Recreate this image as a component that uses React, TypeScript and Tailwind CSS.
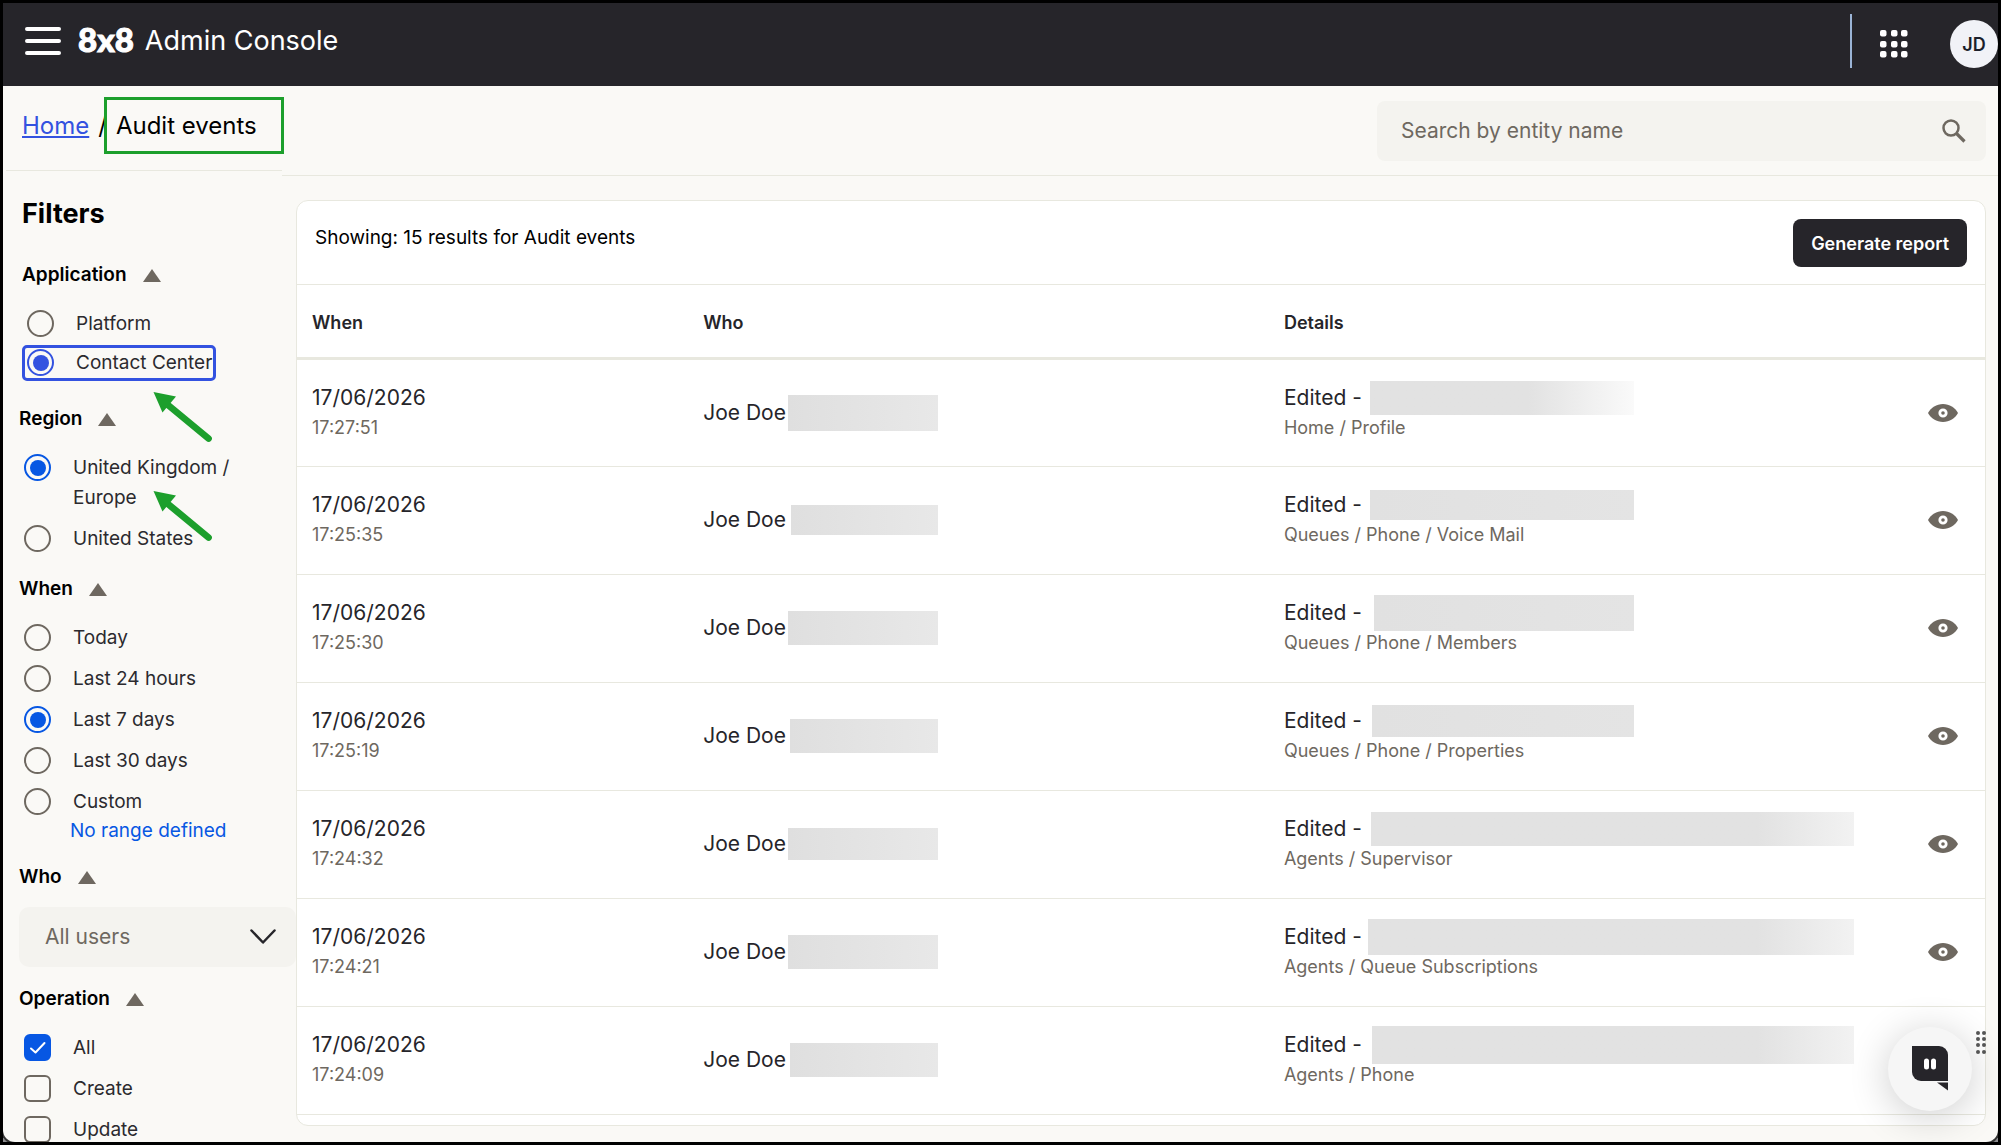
import React, { useState } from 'react'

interface AuditEvent {
  time: string
  path: string
  who: [number, number]
  detail: [number, number]
  fade: 'strong' | 'none' | 'edge'
}

// who / detail: width and height of the masked value
const events: AuditEvent[] = [
  { time: '17:27:51', path: 'Home / Profile', who: [150, 36], detail: [264, 34], fade: 'strong' },
  { time: '17:25:35', path: 'Queues / Phone / Voice Mail', who: [147, 30], detail: [264, 30], fade: 'none' },
  { time: '17:25:30', path: 'Queues / Phone / Members', who: [150, 34], detail: [260, 36], fade: 'none' },
  { time: '17:25:19', path: 'Queues / Phone / Properties', who: [148, 34], detail: [262, 32], fade: 'none' },
  { time: '17:24:32', path: 'Agents / Supervisor', who: [150, 32], detail: [483, 34], fade: 'edge' },
  { time: '17:24:21', path: 'Agents / Queue Subscriptions', who: [150, 34], detail: [486, 36], fade: 'edge' },
  { time: '17:24:09', path: 'Agents / Phone', who: [148, 34], detail: [482, 38], fade: 'edge' },
]

const fades = {
  strong: 'bg-linear-to-r from-[#e2e2e2] from-60% to-[#fafafa]',
  none: 'bg-linear-to-r from-[#e1e1e1] to-[#e4e4e4]',
  edge: 'bg-linear-to-r from-[#e2e2e2] from-80% to-[#f2f2f2]',
}

function EyeIcon() {
  return (
    <svg width="30" height="18" viewBox="0 0 30 18" fill="none">
      <path d="M0 9C3 3.500 8.500 0 15 0s12 3.500 15 9c-3 5.500-8.500 9-15 9S3 14.500 0 9Z" fill="#6e6860" />
      <circle cx="15" cy="9" r="3.200" stroke="#fff" strokeWidth="2.800" />
    </svg>
  )
}

function GreenArrow() {
  return (
    <svg className="absolute left-[151px] z-10" width="62" height="54" viewBox="0 0 62 54">
      <path d="M17 14 57.500 47.500" stroke="#1c9f2c" strokeWidth="6.800" strokeLinecap="round" />
      <path d="M2.500 1 25 5.500 11.500 21.500Z" fill="#1c9f2c" />
    </svg>
  )
}

function Section({ title, children }: { title: string; children: React.ReactNode }) {
  return (
    <section>
      <h3 className="flex h-6 items-center gap-4 text-[19px] font-semibold text-black">
        {title}
        <svg width="18" height="13" viewBox="0 0 18 13">
          <path d="M9 0 18 13H0Z" fill="#6e6860" />
        </svg>
      </h3>
      {children}
    </section>
  )
}

interface OptionProps {
  type?: 'radio' | 'checkbox'
  name: string
  label: React.ReactNode
  checked: boolean
  onChange: () => void
  focused?: boolean
}

function Option({ type = 'radio', name, label, checked, onChange, focused }: OptionProps) {
  const accent = focused
    ? 'checked:border-[#3352e0] before:bg-[#3352e0]'
    : 'checked:border-[#0757e3] before:bg-[#0757e3]'
  return (
    <label className="flex items-start gap-[22px] pt-[6px] pb-[5px] pl-[5px] text-[19px] leading-[30px] text-[#2b2a2e]">
      {type === 'radio' ? (
        <input
          type="radio"
          name={name}
          checked={checked}
          onChange={onChange}
          className={`mt-[1px] grid size-[27px] shrink-0 appearance-none place-content-center rounded-full border-2 border-[#6e6860] before:size-4 before:scale-0 before:rounded-full checked:before:scale-100 ${accent}`}
        />
      ) : (
        <span className="relative mt-[1px] size-[27px] shrink-0">
          <input
            type="checkbox"
            name={name}
            aria-label={String(label)}
            checked={checked}
            onChange={onChange}
            className="block size-[27px] appearance-none rounded-md border-2 border-[#6e6860] checked:border-[#0757e3] checked:bg-[#0757e3]"
          />
          {checked && (
            <svg className="pointer-events-none absolute inset-0" width="27" height="27" viewBox="0 0 27 27" fill="none">
              <path d="m7 14.500 4.500 4 9-9.500" stroke="#fff" strokeWidth="2" strokeLinecap="round" strokeLinejoin="round" />
            </svg>
          )}
        </span>
      )}
      <span>{label}</span>
    </label>
  )
}

function Header() {
  return (
    <header className="flex h-[83px] shrink-0 items-start bg-[#26252a] pl-[22px] text-white">
      <div className="mt-[22px] flex h-8 items-center">
        <button aria-label="Menu">
          <svg width="36" height="28" viewBox="0 0 36 28" stroke="#fff" strokeWidth="4" strokeLinecap="round">
            <path d="M2 2h32M2 14h32M2 26h32" />
          </svg>
        </button>
        <span className="ml-[17px] pb-1 font-['Lato',sans-serif] text-[33px] leading-8 font-black [-webkit-text-stroke:1px_#fff]">8x8</span>
        <span className="ml-[11px] text-[27px] leading-8">Admin Console</span>
      </div>
      <div className="ml-auto flex h-[82px] items-center">
        <div className="mt-[11px] h-[54px] w-[2px] self-start bg-[#9bb4d6]" />
        <button className="ml-7" aria-label="Apps">
          <svg width="28" height="28" viewBox="0 0 28 28" fill="#fff">
            {[0, 11, 21].map(y =>
              [0, 11, 21].map(x => <rect key={`${x}-${y}`} x={x} y={y} width="6.500" height="6.500" rx="2" />)
            )}
          </svg>
        </button>
        <button className="ml-[42px] size-12 rounded-full bg-[#f1f2f7] text-[18px] font-semibold text-[#1c1f2b]">JD</button>
      </div>
    </header>
  )
}

function Filters() {
  const [application, setApplication] = useState('Contact Center')
  const [region, setRegion] = useState('uk')
  const [when, setWhen] = useState('Last 7 days')
  const [operation, setOperation] = useState('All')

  return (
    <div className="pl-4">
      <h2 className="mt-6 ml-[3px] text-[27px] leading-[38px] font-bold text-black">Filters</h2>
      <div className="mt-[30px] ml-[3px]">
        <Section title="Application">
          <div className="mt-4">
            <Option name="application" label="Platform" checked={application === 'Platform'} onChange={() => setApplication('Platform')} />
            <div className="mt-[1px] h-9 w-[194px] rounded-[5px] outline-[3px] -outline-offset-[3px] outline-[#3352e0]">
              <div className="-translate-y-[3px] whitespace-nowrap">
                <Option name="application" label="Contact Center" checked={application === 'Contact Center'} onChange={() => setApplication('Contact Center')} focused />
              </div>
            </div>
          </div>
        </Section>
      </div>
      <div className="relative -ml-[19px]">
        <div className="absolute top-[10px]"><GreenArrow /></div>
      </div>
      <div className="mt-[26px]">
        <Section title="Region">
          <div className="mt-4">
            <Option
              name="region"
              label={<>United Kingdom /<br />Europe</>}
              checked={region === 'uk'}
              onChange={() => setRegion('uk')}
            />
            <div className="relative -ml-[19px]">
              <div className="absolute -top-[28px]"><GreenArrow /></div>
            </div>
            <Option name="region" label="United States" checked={region === 'us'} onChange={() => setRegion('us')} />
          </div>
        </Section>
      </div>
      <div className="mt-[18px]">
        <Section title="When">
          <div className="mt-4">
            {['Today', 'Last 24 hours', 'Last 7 days', 'Last 30 days', 'Custom'].map(item => (
              <Option key={item} name="when" label={item} checked={when === item} onChange={() => setWhen(item)} />
            ))}
          </div>
          <a href="#range" className="-mt-[6px] ml-[51px] block text-[19px] leading-[30px] text-[#0757e3]">No range defined</a>
        </Section>
      </div>
      <div className="mt-[19px]">
        <Section title="Who">
          <div className="relative mt-[18px] -mr-[14px]">
            <select aria-label="Who" className="h-[60px] w-full appearance-none rounded-[10px] bg-[#f4f3ef] pl-[26px] text-[21px] text-[#6e6860]">
              <option>All users</option>
            </select>
            <svg className="pointer-events-none absolute top-[22px] right-5" width="26" height="16" viewBox="0 0 26 16" fill="none">
              <path d="M1.500 1.500 13 13.500l11.500-12" stroke="#26252a" strokeWidth="2.500" strokeLinecap="round" strokeLinejoin="round" />
            </svg>
          </div>
        </Section>
      </div>
      <div className="mt-5">
        <Section title="Operation">
          <div className="mt-4">
            {['All', 'Create', 'Update'].map(item => (
              <Option key={item} type="checkbox" name="operation" label={item} checked={operation === item} onChange={() => setOperation(item)} />
            ))}
          </div>
        </Section>
      </div>
    </div>
  )
}

function Results() {
  return (
    <section className="mt-6 mr-3 ml-[14px] overflow-hidden rounded-xl border border-[#e8e8df] bg-white pb-[10px]">
      <div className="flex h-[84px] items-start justify-between border-b border-[#e8e8df] px-[18px] pt-[18px]">
        <p className="mt-[5px] text-[19px] leading-7 text-black">Showing: 15 results for Audit events</p>
        <button className="h-12 rounded-lg bg-[#26252a] px-[18px] text-[18px] font-semibold whitespace-nowrap text-white">Generate report</button>
      </div>
      <table className="w-full table-fixed border-collapse text-left text-[#26252a]">
        <thead>
          <tr className="h-[73px] border-b-[3px] border-[#e8e8df] text-[18px]">
            <th className="w-[23%] pt-[3px] pl-[15px] font-semibold">When</th>
            <th className="w-[34.4%] pt-[3px] pl-[18px] font-semibold">Who</th>
            <th className="pt-[3px] pl-[18px] font-semibold">Details</th>
            <th className="w-[84px]" aria-label="Actions" />
          </tr>
        </thead>
        <tbody>
          {events.map(event => (
            <tr key={event.time} className="h-[108px] border-b border-[#e8e8df]">
              <td className="pl-[15px]">
                <div className="text-[21px] leading-[30px]">17/06/2026</div>
                <div className="text-[18px] leading-[30px] text-[#6e6860]">{event.time}</div>
              </td>
              <td className="pl-[18px]">
                <div className="flex h-[30px] w-[235px] items-center justify-between text-[21px] whitespace-nowrap">
                  Joe Doe
                  <span
                    className="bg-linear-to-r from-[#dfdfdf] to-[#e8e8e8]"
                    style={{ width: event.who[0], height: event.who[1] }}
                  />
                </div>
              </td>
              <td className="pl-[18px]">
                <div className={`flex h-[30px] items-center justify-between text-[21px] whitespace-nowrap ${event.fade === 'edge' ? 'w-[570px]' : 'w-[350px]'}`}>
                  Edited -
                  <span className={fades[event.fade]} style={{ width: event.detail[0], height: event.detail[1] }} />
                </div>
                <div className="text-[18px] leading-[30px] text-[#6e6860]">{event.path}</div>
              </td>
              <td>
                <button className="mx-auto block" aria-label="View"><EyeIcon /></button>
              </td>
            </tr>
          ))}
        </tbody>
      </table>
    </section>
  )
}

function ChatWidget() {
  return (
    <div className="absolute right-3 bottom-[31px] flex items-start gap-1">
      <button aria-label="Chat" className="grid size-[84px] place-content-center rounded-full bg-[#f6f6f6] shadow-[0_6px_40px_rgba(0,0,0,0.2)]">
        <svg width="36" height="46" viewBox="0 0 36 46">
          <path d="M0 0h27a9 9 0 0 1 9 9v26H9a9 9 0 0 1-9-9Z" fill="#26252a" />
          <path d="M25 36.500h11V44.500Z" fill="#26252a" />
          <rect x="12" y="12.500" width="5" height="11" rx="2.500" fill="#fff" />
          <rect x="19" y="12.500" width="5" height="11" rx="2.500" fill="#fff" />
        </svg>
      </button>
      <svg className="mt-1" width="10" height="24" viewBox="0 0 10 24" fill="#555">
        {[2, 8, 14, 21].map(y => [2, 8].map(x => <circle key={`${x}-${y}`} cx={x} cy={y} r="2" />))}
      </svg>
    </div>
  )
}

export default function App() {
  return (
    <div className="h-screen overflow-hidden border-[3px] border-black bg-[#8d8d90] font-['Inter',sans-serif]">
      <div className="relative flex h-full flex-col overflow-hidden rounded-b-xl bg-[#faf9f6] shadow-[0_0_0_2px_#333]">
        <Header />
        <div className="flex min-h-0 flex-1 overflow-hidden">
          <aside className="z-10 w-[279px] shrink-0">
            <nav className="ml-[3px] flex h-[85px] items-start border-b border-[#e8e8df] pt-[11px] pl-4 text-[24px] whitespace-nowrap text-black">
              <a href="#home" className="mt-3 leading-[34px] text-[#3352e0] underline">Home</a>
              <span className="mt-3 ml-[9px] leading-[34px]">/</span>
              <span className="relative -mr-[3px] -ml-[3px] h-[57px] w-[180px] border-[3px] border-[#1c9f2c] bg-[#faf9f6] pt-[9px] pl-[9px] leading-[34px]">Audit events</span>
            </nav>
            <Filters />
          </aside>
          <main className="min-w-0 flex-1">
            <div className="flex h-[90px] justify-end border-b border-[#e8e8df] pt-[15px] pr-3">
              <div className="flex h-[60px] w-[609px] items-center rounded-lg bg-[#f4f3ef] pr-5 pl-6">
                <input
                  type="text"
                  aria-label="Search by entity name"
                  placeholder="Search by entity name"
                  className="min-w-0 flex-1 bg-transparent text-[21px] outline-none placeholder:text-[#6e6860]"
                />
                <svg width="24" height="24" viewBox="0 0 24 24" fill="none" stroke="#6e6860">
                  <circle cx="9" cy="9" r="7.500" strokeWidth="2.500" />
                  <path d="m14.500 14.500 8 8" strokeWidth="3.200" />
                </svg>
              </div>
            </div>
            <Results />
          </main>
        </div>
        <ChatWidget />
      </div>
    </div>
  )
}
